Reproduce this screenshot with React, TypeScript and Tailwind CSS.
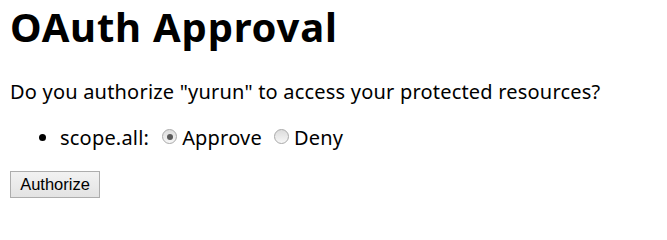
import React from "react";

function Radio({ checked }: { checked?: boolean }) {
  return (
    <span className="inline-block h-[15px] w-[15px] rounded-full border border-[#a9a9a9] bg-gradient-to-b from-[#dcdcdc] to-[#f7f7f7] p-[3.5px] align-[1px]">
      {checked ? <span className="block h-[6px] w-[6px] rounded-full bg-[#5a5a5a]" /> : null}
    </span>
  );
}

export default function App() {
  return (
    <div className="h-[218px] overflow-hidden bg-white pl-[10px] text-black font-['Noto_Sans',sans-serif]">
      <h1 className="m-0 text-[40px] font-bold leading-[54px] tracking-[0.8px]">OAuth Approval</h1>
      <p className="mt-[24px] text-[20px] leading-[28px] tracking-[0.2px]">
        Do you authorize "yurun" to access your protected resources?
      </p>
      <ul className="mt-[18px] list-disc pl-[50px] text-[20px] leading-[28px] tracking-[0.2px]">
        <li>
          <span>scope.all:</span>
          <label className="ml-[13px]">
            <Radio checked />
            <span className="ml-[5px]">Approve</span>
          </label>
          <label className="ml-[12px]">
            <Radio />
            <span className="ml-[5px]">Deny</span>
          </label>
        </li>
      </ul>
      <button className="mt-[19px] block h-[27px] w-[90px] border border-[#adadad] bg-gradient-to-b from-[#f2f2f2] to-[#e3e3e3] text-[16.5px] leading-none font-['Liberation_Sans',sans-serif]">
        Authorize
      </button>
    </div>
  );
}
